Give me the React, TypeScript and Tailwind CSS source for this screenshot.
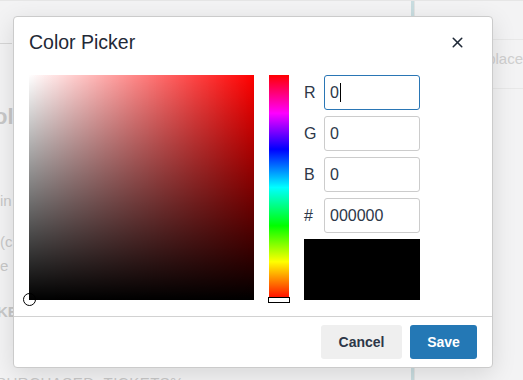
import React from "react"
import { X } from "lucide-react"

const FONT = "font-['Liberation_Sans','Helvetica_Neue',Arial,sans-serif]"

// rows for the right side of the picker
const channels = [
  { label: "R", value: "0", focused: true },
  { label: "G", value: "0" },
  { label: "B", value: "0" },
  { label: "#", value: "000000" },
]

function Backdrop() {
  // faint page content that sits behind the dialog
  return (
    <div className="flex h-full flex-col bg-[#f3f3f4] text-[#c8c8c8]">
      <div className="flex h-[15px] border-b border-[#e6e6e6] bg-[#f5f5f5]">
        <div className="w-[420px] shrink-0" />
        <div className="w-[20px] border-l border-[#e4e4e4] bg-[#f1f1f1]" />
        <div className="flex-1 bg-[#f4f4f6]" />
      </div>
      <div className="flex flex-1">
        <div className="flex w-[405px] shrink-0 flex-col">
          <div className="mt-[42px] ml-[-2px] h-px w-[14px] bg-[#d6d6d6]" />
          <div className="mt-[63px] ml-[-6px] text-[22px] font-bold leading-[20px]">ol</div>
          <div className="mt-[65px] text-[15px] leading-[18px]">in</div>
          <div className="mt-[23px] text-[15px] leading-[18px]">(c</div>
          <div className="mt-[6px] text-[15px] leading-[18px]">e</div>
          <div className="mt-[28px] ml-[-3px] text-[15px] font-bold leading-[18px]">KE</div>
          <div className="mt-[53px] ml-[-4px] text-[15px] leading-[18px] tracking-[0.5px]">PURCHASED_TICKETS%</div>
        </div>
        <div className="w-[15px] border-r-[3px] border-[#c9dde0]" />
        <div className="flex flex-1 flex-col border-l border-[#e4e4e4]">
          <div className="mt-[38px] h-px bg-[#e8e8e8]" />
          <div className="pl-[72px] pt-[10px] text-[15px] leading-[18px] text-[#cfcfcf]">place</div>
          <div className="mt-[20px] h-px bg-[#e8e8e8]" />
        </div>
      </div>
    </div>
  )
}

function SaturationSquare() {
  return (
    <div className="relative h-[225px] w-[225px] shrink-0 bg-[#ff0000] bg-[linear-gradient(to_top,#000,transparent),linear-gradient(to_right,#fff,rgba(255,255,255,0))]">
      <div className="absolute bottom-[-6px] left-[-6px] h-[13px] w-[13px] rounded-full border-[1.5px] border-black" />
    </div>
  )
}

function HueBar() {
  return (
    <div className="relative h-[225px] w-[20px] shrink-0 bg-[linear-gradient(to_bottom,#f00_0%,#f0f_17%,#00f_33%,#0ff_50%,#0f0_67%,#ff0_83%,#f00_100%)]">
      <div className="absolute bottom-[-3px] left-[-1px] h-[6px] w-[22px] border border-black bg-white" />
    </div>
  )
}

export default function App() {
  return (
    <div className={`relative h-[380px] w-[523px] overflow-hidden ${FONT}`}>
      <Backdrop />

      {/* dialog layer */}
      <div className="absolute inset-0 pl-[13px] pt-[16px]">
        <div className="flex h-[352px] w-[480px] flex-col rounded-[4px] border border-[#cbcbcb] bg-white shadow-[0_6px_24px_rgba(0,0,0,0.12)]">
          <div className="flex h-[58px] items-start justify-between pl-[15px] pr-[26px] pt-[11px]">
            <h2 className="text-[19.5px] leading-[28px] text-[#1f2937]">Color Picker</h2>
            <X size={17} strokeWidth={2.2} className="mt-[6px] text-[#1f2937]" />
          </div>

          <div className="flex gap-[15px] pl-[15px] pb-[16px]">
            <SaturationSquare />
            <HueBar />
            <div className="flex w-[116px] flex-col gap-[6px]">
              {channels.map((c) => (
                <div key={c.label} className="flex h-[35px] items-center">
                  <span className="w-[20px] text-[16px] text-[#2d3748]">{c.label}</span>
                  <div
                    className={
                      c.focused
                        ? "flex h-[35px] flex-1 items-center rounded-[3px] border border-[#2a76b5] px-[5px] text-[16px] text-[#2d3748]"
                        : "flex h-[35px] flex-1 items-center rounded-[3px] border border-[#cccccc] px-[5px] text-[16px] text-[#2d3748]"
                    }
                  >
                    {c.value}
                    {c.focused && <span className="ml-px h-[19px] w-px bg-black" />}
                  </div>
                </div>
              ))}
              <div className="h-[61px] bg-black" />
            </div>
          </div>

          <div className="flex flex-1 items-start justify-end gap-[8px] border-t border-[#d2d2d2] pr-[15px] pt-[8px]">
            <button className="h-[34px] w-[81px] rounded-[3px] bg-[#efefef] text-[14px] font-bold text-[#2d3748]">
              Cancel
            </button>
            <button className="h-[34px] w-[67px] rounded-[3px] bg-[#2478b5] text-[14px] font-bold text-white">
              Save
            </button>
          </div>
        </div>
      </div>
    </div>
  )
}
